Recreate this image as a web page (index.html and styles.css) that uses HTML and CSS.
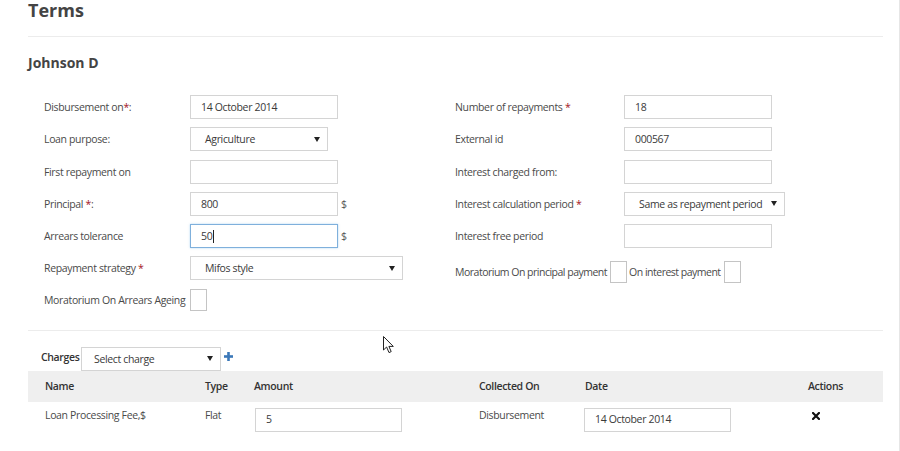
FILE: index.html
```html
<!DOCTYPE html>
<html>
<head>
<meta charset="utf-8">
<link rel="stylesheet" href="styles.css">
</head>
<body>
<div class="page">
  <h2 class="title">Terms</h2>
  <div class="rule"></div>
  <h3 class="client">Johnson D</h3>

  <div class="form">
    <div class="col col-left">
      <div class="row"><span class="label">Disbursement on<span class="req">*</span>:</span><div class="field w148">14 October 2014</div></div>
      <div class="row"><span class="label">Loan purpose:</span><div class="field select w138"><span>Agriculture</span><i class="caret-down"></i></div></div>
      <div class="row"><span class="label">First repayment on</span><div class="field w148"></div></div>
      <div class="row"><span class="label">Principal <span class="req">*</span>:</span><div class="field w148">800</div><span class="unit">$</span></div>
      <div class="row"><span class="label">Arrears tolerance</span><div class="field w148 focus">50<span class="cursor-bar"></span></div><span class="unit">$</span></div>
      <div class="row"><span class="label">Repayment strategy <span class="req">*</span></span><div class="field select w213"><span>Mifos style</span><i class="caret-down"></i></div></div>
      <div class="row row-check"><span class="label">Moratorium On Arrears Ageing</span><span class="check"></span></div>
    </div>
    <div class="col col-right">
      <div class="row"><span class="label">Number of repayments <span class="req">*</span></span><div class="field w148">18</div></div>
      <div class="row"><span class="label">External id</span><div class="field w148">000567</div></div>
      <div class="row"><span class="label">Interest charged from:</span><div class="field w148"></div></div>
      <div class="row"><span class="label">Interest calculation period <span class="req">*</span></span><div class="field select w161"><span>Same as repayment period</span><i class="caret-down"></i></div></div>
      <div class="row"><span class="label">Interest free period</span><div class="field w148"></div></div>
      <div class="row row-check row-mor"><span class="inline-label">Moratorium On principal payment</span><span class="check"></span><span class="inline-label">On interest payment</span><span class="check"></span></div>
    </div>
  </div>

  <div class="rule rule-2"></div>

  <div class="charges-bar">
    <span class="charges-label">Charges</span>
    <div class="field select charge-select"><span>Select charge</span><i class="caret-down"></i></div>
    <svg class="plus" width="9" height="9" viewBox="0 0 9 9"><rect x="3.2" y="0" width="2.6" height="9" fill="#3b78b8"/><rect x="0" y="3.2" width="9" height="2.6" fill="#3b78b8"/></svg>
  </div>

  <table class="charges">
    <thead>
      <tr>
        <th class="c-name">Name</th>
        <th class="c-type">Type</th>
        <th class="c-amount">Amount</th>
        <th class="c-coll">Collected On</th>
        <th class="c-date">Date</th>
        <th class="c-act">Actions</th>
      </tr>
    </thead>
    <tbody>
      <tr>
        <td>Loan Processing Fee,$</td>
        <td>Flat</td>
        <td><div class="field w147 cell-field">5</div></td>
        <td>Disbursement</td>
        <td><div class="field w147 cell-field date-field">14 October 2014</div></td>
        <td><svg class="remove" width="8" height="8" viewBox="0 0 8 8"><path d="M1 1L7 7M7 1L1 7" stroke="#111" stroke-width="2.2" stroke-linecap="square"/></svg></td>
      </tr>
    </tbody>
  </table>

  <svg class="pointer" width="12" height="18" viewBox="0 0 12 18"><path d="M0.5 0.5 L0.5 14 L3.6 11 L6 16.6 L8.2 15.6 L5.9 10.4 L10.3 10.4 Z" fill="#fff" stroke="#222" stroke-width="1" stroke-linejoin="round"/></svg>
</div>
</body>
</html>
```
FILE: styles.css
```css
* { box-sizing: border-box; }
html, body { margin: 0; padding: 0; background: #fff; }
body {
  font-family: "Open Sans", "Noto Sans", sans-serif;
  font-size: 10.5px;
  letter-spacing: -0.35px;
  color: #4a4a4a;
}
.page {
  position: relative;
  width: 900px;
  min-height: 451px;
  padding: 2px 16px 0 28px;
  border-right: 1px solid #e6e6e6;
}
.title {
  margin: 0;
  font-size: 18px;
  line-height: 20px;
  font-weight: 700;
  letter-spacing: 0;
  color: #444;
  margin-top: -2px;
}
.rule {
  height: 0;
  border-top: 1px solid #ececec;
  margin-top: 16px;
}
.client {
  margin: 17px 0 0;
  font-size: 14px;
  line-height: 18px;
  font-weight: 700;
  letter-spacing: 0;
  color: #444;
}
.form {
  display: grid;
  grid-template-columns: 411px 1fr;
  margin-top: 23px;
  padding-left: 16px;
}
.col { display: flex; flex-direction: column; gap: 8.3px; }
.row { display: flex; align-items: center; height: 24px; }
.col-left .label { width: 146px; flex: none; }
.col-right .label { width: 169px; flex: none; }
.label, .inline-label { white-space: nowrap; color: #4a4a4a; }
.req { color: #a3141c; }
.field {
  height: 24px;
  border: 1px solid #d4d4d4;
  background: #fff;
  color: #3a3a3a;
  padding: 0 10px;
  display: flex;
  align-items: center;
  white-space: nowrap;
}
.w148 { width: 148px; }
.w147 { width: 147px; }
.w138 { width: 138px; }
.w213 { width: 213px; }
.w161 { width: 161px; }
.select { padding: 0 7px 0 14px; justify-content: space-between; }
.caret-down {
  width: 0; height: 0;
  border-left: 3px solid transparent;
  border-right: 3px solid transparent;
  border-top: 5px solid #222;
  flex: none;
}
.focus { border-color: #7fb0dc; box-shadow: 0 0 2px rgba(102,175,233,0.5); }
.cursor-bar { display: inline-block; width: 1px; height: 13px; background: #222; margin-left: 1px; }
.unit { margin-left: 3px; color: #555; }
.row-check { height: 22px; }
.check {
  display: inline-block;
  width: 17px; height: 22px;
  border: 1px solid #c4c4c4;
  background: #fff;
  flex: none;
}
.col-left .row-check .label { width: auto; margin-right: 5px; }
.row-mor { margin-top: 5px; }
.row-mor .inline-label { letter-spacing: -0.5px; }
.row-mor .check { margin: 0 2px 0 3px; }
.rule-2 { margin-top: 19px; }
.charges-bar {
  display: flex;
  align-items: center;
  margin-top: 16px;
  padding-left: 13px;
}
.charges-label { font-weight: 600; color: #333; width: 40px; margin-top: -3px; }
.charge-select { width: 140px; padding-left: 12px; }
.plus { margin-left: 3px; margin-top: -4px; }
.charges {
  width: 100%;
  border-collapse: collapse;
  table-layout: fixed;
}
.charges th {
  background: #efefef;
  height: 31px;
  text-align: left;
  font-weight: 600;
  color: #333;
  padding: 0 0 0 17px;
}
.c-name { width: 160px; }
.c-type { width: 49px; }
.c-amount { width: 225px; }
.c-coll { width: 106px; }
.c-date { width: 223px; }
.charges td {
  padding: 6px 0 0 17px;
  height: 38px;
  vertical-align: top;
  color: #4a4a4a;
  line-height: 15px;
}
.cell-field { margin-left: 1px; }
.date-field { margin-left: -1px; }
.charges td:nth-child(6) { padding-left: 21px; padding-top: 10px; }
.remove { display: block; }
.pointer { position: absolute; left: 383px; top: 336px; }
```
